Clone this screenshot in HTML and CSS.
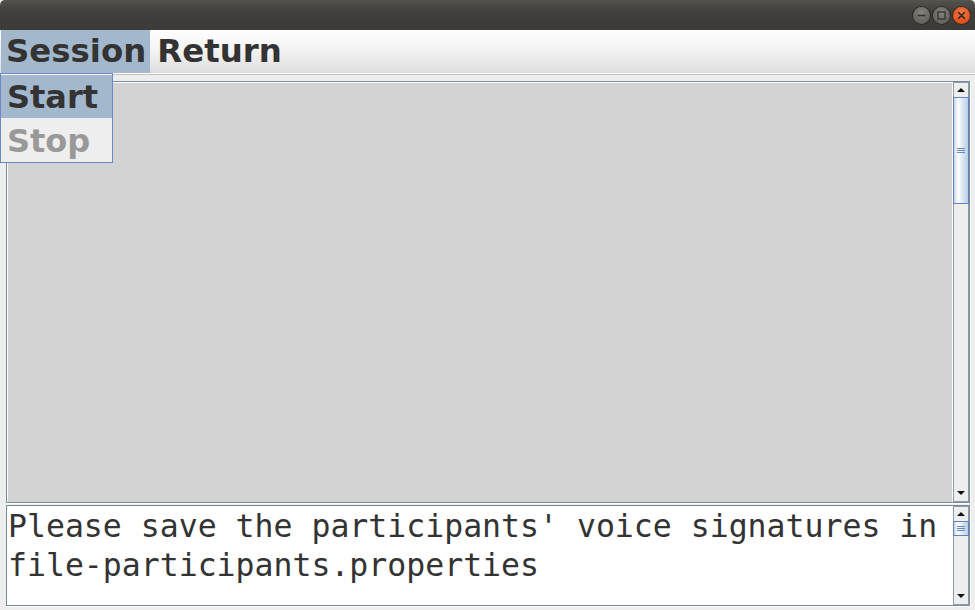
FILE: index.html
```html
<!DOCTYPE html>
<html>
<head>
<meta charset="utf-8">
<title>Session</title>
<link rel="stylesheet" href="styles.css">
</head>
<body>
<div class="window">
  <div class="titlebar">
    <div class="wbtn wmin">
      <svg width="17" height="17" viewBox="0 0 17 17"><line x1="4.5" y1="8.5" x2="12.5" y2="8.5" stroke="#34332f" stroke-width="1.6"/></svg>
    </div>
    <div class="wbtn wmax">
      <svg width="17" height="17" viewBox="0 0 17 17"><rect x="5" y="5" width="7" height="7" fill="none" stroke="#34332f" stroke-width="1.3"/></svg>
    </div>
    <div class="wbtn wclose">
      <svg width="17" height="17" viewBox="0 0 17 17"><path d="M5.6 5.6 L11.4 11.4 M11.4 5.6 L5.6 11.4" stroke="#3a2a22" stroke-width="1.6" stroke-linecap="round"/></svg>
    </div>
  </div>

  <div class="menubar">
    <div class="menu active">Session</div>
    <div class="menu">Return</div>
  </div>

  <div class="content">
    <div class="pane pane-top">
      <div class="view view-gray"></div>
      <div class="vscroll">
        <div class="arrow arrow-up"></div>
        <div class="track"><div class="thumb thumb-top"></div></div>
        <div class="arrow arrow-down"></div>
      </div>
    </div>
    <div class="pane pane-bottom">
      <div class="view view-text">Please save the participants' voice signatures in<br>file-participants.properties</div>
      <div class="vscroll">
        <div class="arrow arrow-up"></div>
        <div class="track"><div class="thumb thumb-bottom"></div></div>
        <div class="arrow arrow-down"></div>
      </div>
    </div>
  </div>

  <div class="popup">
    <div class="item selected">Start</div>
    <div class="item disabled">Stop</div>
  </div>
</div>
</body>
</html>
```

FILE: styles.css
```css
html, body {
  margin: 0;
  padding: 0;
  background: #eeeeee;
}

.window {
  position: relative;
  width: 975px;
  height: 610px;
  overflow: hidden;
  background: #eeeeee;
  font-family: "DejaVu Sans", "Liberation Sans", sans-serif;
}

/* Title bar */
.titlebar {
  height: 30px;
  box-sizing: border-box;
  background: linear-gradient(#55534e, #403f3b 40%, #3c3b37);
  border-radius: 5px 5px 0 0;
  display: flex;
  justify-content: flex-end;
  align-items: center;
  gap: 3px;
  padding-right: 5px;
}

.wbtn {
  width: 17px;
  height: 17px;
  border-radius: 50%;
  box-sizing: border-box;
  display: flex;
  align-items: center;
  justify-content: center;
}

.wbtn svg {
  display: block;
}

.wmin, .wmax {
  background: radial-gradient(circle at 50% 35%, #86857f, #63625d 70%, #55544f);
  box-shadow: 0 0 0 1px #2c2b28;
}

.wclose {
  background: radial-gradient(circle at 50% 35%, #f37a4c, #e4531f 65%, #c7420f);
  box-shadow: 0 0 0 1px #3a2a22;
}

/* Menu bar */
.menubar {
  height: 44px;
  box-sizing: border-box;
  display: flex;
  padding-left: 1px;
  background: linear-gradient(#fefefe, #f4f4f4 45%, #dedede);
  border-bottom: 1px solid #ffffff;
}

.menu {
  height: 43px;
  line-height: 43px;
  padding: 0 5px 0 7px;
  font-size: 32.4px;
  font-weight: bold;
  color: #333333;
}

.menu.active {
  background: #a3b8cc;
  padding-left: 5px;
  padding-right: 4px;
}

/* Content */
.content {
  border-top: 1px solid #c2c2c2;
  padding: 6px 5px 4px 6px;
  display: flex;
  flex-direction: column;
  gap: 2px;
}

.pane {
  box-sizing: border-box;
  border: 1px solid #7a8a99;
  box-shadow: 1px 1px 0 #ffffff;
  background: #ffffff;
  padding: 1px 0 0 1px;
  display: flex;
}

.pane-top {
  height: 422px;
}

.pane-bottom {
  height: 101px;
}

.view {
  flex: 1;
}

.view-gray {
  background: #d3d3d3;
}

.view-text {
  background: #ffffff;
  padding: 0;
  font-family: "DejaVu Sans Mono", "Liberation Mono", monospace;
  font-size: 31.5px;
  line-height: 38.5px;
  color: #333333;
  white-space: nowrap;
}

/* Scrollbar */
.vscroll {
  width: 17px;
  box-sizing: border-box;
  margin-top: -1px;
  display: flex;
  flex-direction: column;
  background: #eeeeee;
  border-left: 1px solid #ffffff;
}

.arrow {
  position: relative;
  flex: none;
  height: 16px;
  box-sizing: border-box;
  background: #eeeeee;
  border-left: 1px solid #8f9caa;
  border-right: 1px solid #8f9caa;
}

.arrow::after {
  content: "";
  position: absolute;
  left: 3px;
  width: 0;
  height: 0;
  border-left: 4px solid transparent;
  border-right: 4px solid transparent;
}

.arrow-up {
  border-top: 1px solid #8f9caa;
}

.arrow-up::after {
  top: 5px;
  border-bottom: 4px solid #111111;
}

.arrow-down {
  border-bottom: 1px solid #8f9caa;
}

.arrow-down::after {
  top: 5px;
  border-top: 4px solid #111111;
}

.track {
  flex: 1;
  box-sizing: border-box;
  border-left: 1px solid #8f9caa;
  border-right: 1px solid #8f9caa;
  background: #eeeeee;
  display: flex;
  flex-direction: column;
}

.thumb {
  position: relative;
  box-sizing: border-box;
  margin: -1px -1px 0 -1px;
  border: 1px solid #6382bf;
  background: linear-gradient(to right, #c4d6ea 0%, #ffffff 30%, #e2ecf6 55%, #b8cfe5 100%);
}

.thumb::after {
  content: "";
  position: absolute;
  left: 3px;
  right: 3px;
  top: 50%;
  height: 5px;
  margin-top: -3px;
  background: repeating-linear-gradient(#6b88c4 0 1px, transparent 1px 2px);
}

.thumb-top {
  height: 107px;
}

.thumb-bottom {
  height: 15px;
}

/* Popup menu */
.popup {
  position: absolute;
  left: 0;
  top: 73px;
  width: 113px;
  box-sizing: border-box;
  border: 1px solid #6b87c4;
  padding-top: 1px;
  background: #ffffff;
}

.item {
  height: 43px;
  line-height: 45px;
  padding-left: 6px;
  font-size: 32px;
  font-weight: bold;
  color: #333333;
  background: #eeeeee;
}

.item.selected {
  background: #a3b8cc;
}

.item.disabled {
  height: 44px;
  line-height: 46px;
  color: #999999;
}
```
